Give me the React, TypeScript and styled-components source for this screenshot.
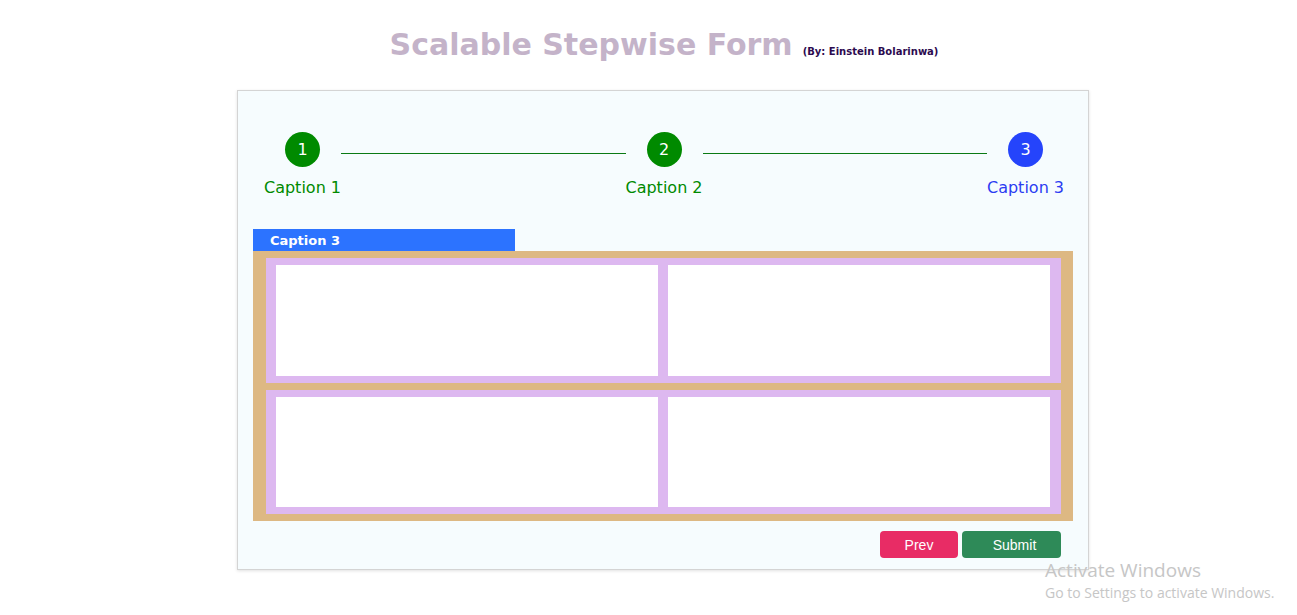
import React from "react";
import styled, { createGlobalStyle } from "styled-components";

const Global = createGlobalStyle`
  html, body { margin: 0; padding: 0; background: #ffffff; }
  body { font-family: "DejaVu Sans", Verdana, sans-serif; }
  * { box-sizing: border-box; }
`;

const Page = styled.div`
  width: 1297px;
  height: 615px;
  position: relative;
  overflow: hidden;
  display: flex;
  flex-direction: column;
  align-items: center;
`;

const Header = styled.div`
  display: flex;
  align-items: baseline;
  gap: 10px;
  margin-top: 27px;
  height: 63px;
  padding-left: 31px;
`;

const Title = styled.h1`
  margin: 0;
  font-family: "DejaVu Sans", Verdana, sans-serif;
  font-weight: bold;
  font-size: 30px;
  line-height: 36px;
  color: #c4b3c9;
`;

const Byline = styled.span`
  font-family: "DejaVu Sans", Verdana, sans-serif;
  font-weight: bold;
  font-size: 10px;
  color: #2c0a4f;
`;

const Card = styled.div`
  width: 852px;
  height: 480px;
  margin-left: 29px;
  background: #f6fcfe;
  border: 1px solid #d4d4d4;
  box-shadow: 0 1px 3px rgba(0, 0, 0, 0.12);
  padding: 41px 15px 0 15px;
  display: flex;
  flex-direction: column;
`;

const Stepper = styled.div`
  display: flex;
  align-items: flex-start;
  padding: 0 9px 0 11px;
`;

const Step = styled.div`
  width: 77px;
  display: flex;
  flex-direction: column;
  align-items: center;
  flex: none;
`;

const Circle = styled.div<{ $color: string }>`
  width: 35px;
  height: 35px;
  border-radius: 50%;
  background: ${(p) => p.$color};
  color: #ffffff;
  display: flex;
  align-items: center;
  justify-content: center;
  font-family: "DejaVu Sans", Verdana, sans-serif;
  font-size: 16px;
`;

const StepCaption = styled.div<{ $color: string }>`
  margin-top: 11px;
  font-family: "DejaVu Sans", Verdana, sans-serif;
  font-size: 16px;
  line-height: 20px;
  color: ${(p) => p.$color};
  white-space: nowrap;
`;

const Connector = styled.div`
  flex: 1;
  height: 1px;
  background: #0a7a14;
  margin-top: 21px;
`;

const Section = styled.div`
  margin-top: 31px;
  display: flex;
  flex-direction: column;
`;

const Tab = styled.div`
  width: 262px;
  height: 22px;
  background: #2c73ff;
  color: #ffffff;
  font-family: "DejaVu Sans", Verdana, sans-serif;
  font-weight: bold;
  font-size: 13px;
  line-height: 23px;
  padding-left: 17px;
`;

const Frame = styled.div`
  height: 270px;
  background: #ddb883;
  padding: 7px 12px 7px 13px;
  display: flex;
  flex-direction: column;
  gap: 7px;
`;

const Row = styled.div`
  flex: 1;
  background: #ddb8f0;
  padding: 7px 11px 7px 10px;
  display: flex;
  gap: 10px;
`;

const Cell = styled.div`
  flex: 1;
  background: #ffffff;
`;

const Actions = styled.div`
  display: flex;
  justify-content: flex-end;
  gap: 4px;
  padding: 10px 12px 0 0;
`;

const Button = styled.button<{ $bg: string; $w: number; $shift?: number }>`
  width: ${(p) => p.$w}px;
  height: 27px;
  border: none;
  border-radius: 4px;
  background: ${(p) => p.$bg};
  color: #ffffff;
  font-family: "Liberation Sans", Arial, sans-serif;
  font-size: 14px;
  padding: 0 0 0 ${(p) => p.$shift ?? 0}px;
  cursor: pointer;
`;

const Watermark = styled.div`
  position: absolute;
  left: 1045px;
  top: 558px;
  font-family: "Open Sans", "Noto Sans", sans-serif;
  color: #c6c6c6;
  pointer-events: none;
`;

const WatermarkTitle = styled.div`
  font-size: 19px;
  line-height: 25px;
`;

const WatermarkText = styled.div`
  font-size: 14px;
  line-height: 20px;
`;

const steps = [
  { n: 1, label: "Caption 1", color: "#008a00", text: "#008a00" },
  { n: 2, label: "Caption 2", color: "#008a00", text: "#008a00" },
  { n: 3, label: "Caption 3", color: "#2544fb", text: "#2c3cf2" },
];

export default function App() {
  return (
    <>
      <Global />
      <Page>
        <Header>
          <Title>Scalable Stepwise Form</Title>
          <Byline>(By: Einstein Bolarinwa)</Byline>
        </Header>
        <Card>
          <Stepper>
            {steps.map((s, i) => (
              <React.Fragment key={s.n}>
                {i > 0 && <Connector />}
                <Step>
                  <Circle $color={s.color}>{s.n}</Circle>
                  <StepCaption $color={s.text}>{s.label}</StepCaption>
                </Step>
              </React.Fragment>
            ))}
          </Stepper>
          <Section>
            <Tab>Caption 3</Tab>
            <Frame>
              <Row>
                <Cell />
                <Cell />
              </Row>
              <Row>
                <Cell />
                <Cell />
              </Row>
            </Frame>
          </Section>
          <Actions>
            <Button $bg="#e82c65" $w={78}>Prev</Button>
            <Button $bg="#2e8a58" $w={99} $shift={6}>Submit</Button>
          </Actions>
        </Card>
        <Watermark>
          <WatermarkTitle>Activate Windows</WatermarkTitle>
          <WatermarkText>Go to Settings to activate Windows.</WatermarkText>
        </Watermark>
      </Page>
    </>
  );
}
